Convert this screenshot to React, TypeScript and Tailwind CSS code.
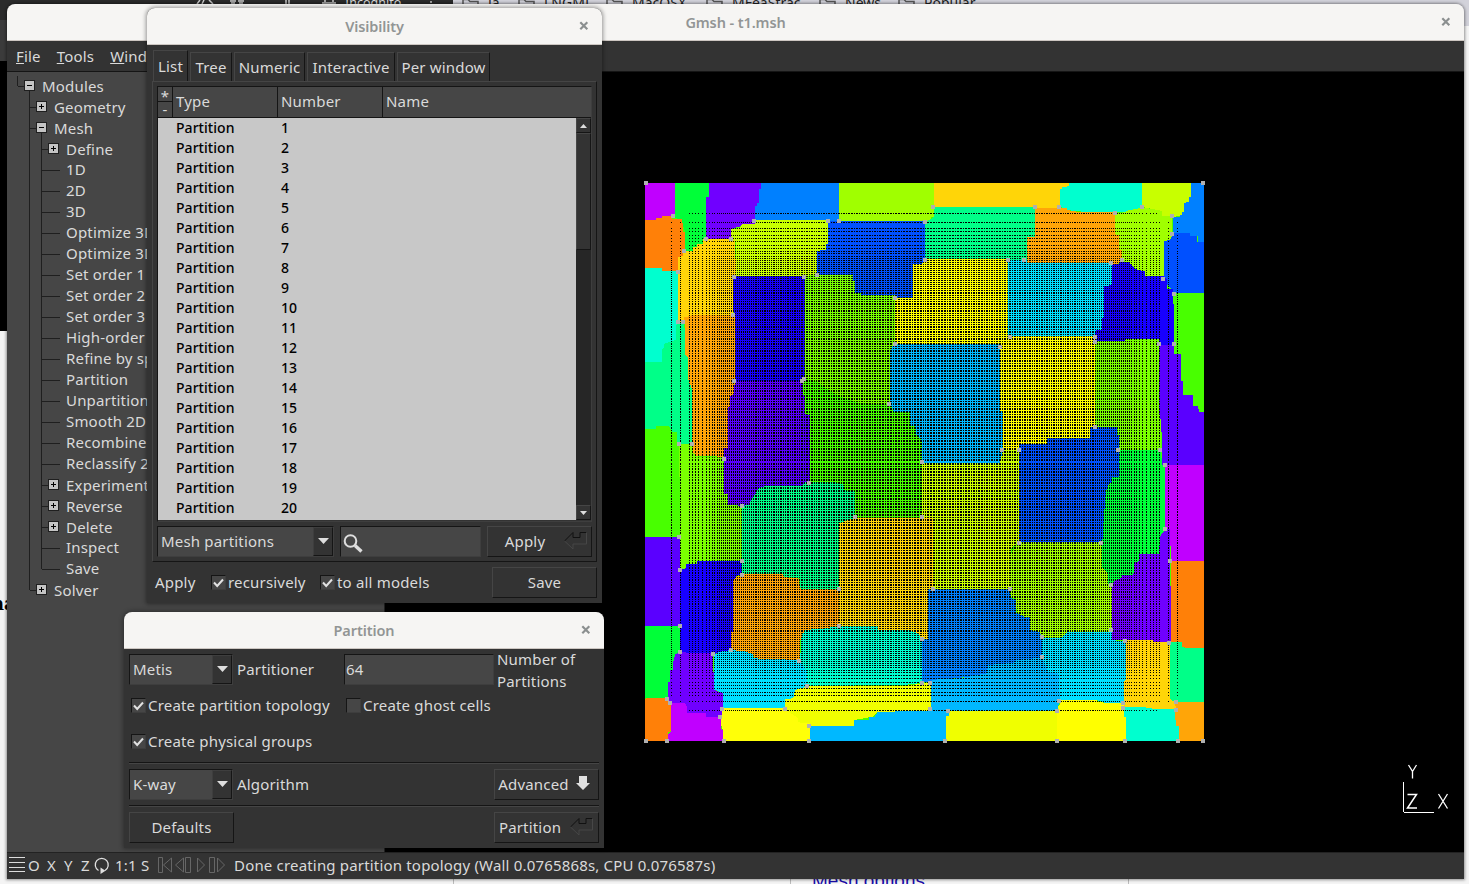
import React from "react";

/* ---------- mesh view ---------- */

const REGIONS: [string, string][] = [
  ["#c000ff", "15,24 105,24 105,127 96,127 96,124 66,124 66,130 48,130 48,136 15,136"],
  ["#00ff38", "105,24 207,24 207,66 198,66 198,192 189,192 189,207 171,207 171,216 159,216 159,228 135,228 135,170 129,150 125,132 105,130"],
  ["#7000ff", "207,24 363,24 363,42 357,42 357,84 351,84 351,93 345,93 345,148 305,148 305,153 273,162 273,192 198,192 198,66 207,66"],
  ["#0080ff", "363,24 597,24 597,137 345,137 345,93 351,93 351,84 357,84 357,42 363,42"],
  ["#a0ff00", "597,24 882,24 882,125 873,125 873,132 855,140 597,137"],
  ["#ffd508", "882,24 1287,24 1287,34 1266,36 1266,42 1260,42 1260,99 882,96"],
  ["#00ffcf", "1287,24 1506,24 1506,100 1494,108 1458,108 1458,112 1323,112 1323,108 1281,106 1281,102 1260,96 1260,42 1266,42 1266,36 1287,34"],
  ["#c8ff00", "1506,24 1653,24 1653,66 1647,66 1647,80 1632,84 1632,110 1626,122 1596,126 1566,122 1566,108 1540,102 1506,96"],
  ["#0080ff", "1653,24 1692,24 1692,202 1674,202 1674,184 1650,184 1650,174 1599,174 1599,126 1620,126 1620,120 1626,120 1626,110 1632,110 1632,84 1647,80 1647,66 1653,66"],
  ["#0050ff", "1599,174 1650,174 1650,184 1671,184 1671,202 1692,202 1692,357 1689,353 1602,353 1596,343 1581,330 1572,310 1572,198 1590,195 1590,180"],
  ["#ff8008", "15,136 48,136 48,130 66,130 66,124 96,124 96,132 125,132 129,150 129,170 135,170 135,230 125,246 114,250 114,288 66,288 66,279 15,279"],
  ["#00ffcf", "15,279 66,279 66,288 114,288 114,470 108,475 108,495 90,500 85,507 72,507 72,520 66,522 66,560 15,560"],
  ["#00ff88", "15,560 66,560 66,522 72,520 72,507 90,500 108,495 108,450 133,440 136,540 143,545 143,608 155,610 155,808 118,808 112,808 112,772 96,770 88,755 48,753 48,762 15,762"],
  ["#48ff00", "15,762 48,762 48,753 88,753 90,770 112,772 112,808 118,808 118,1086 15,1086"],
  ["#7aff00", "118,808 158,808 158,835 170,835 175,845 250,848 252,957 265,957 265,990 305,993 305,1158 172,1158 172,1167 138,1167 138,1180 120,1185"],
  ["#5a00ff", "15,1086 120,1086 120,1353 15,1353"],
  ["#00ff38", "15,1353 120,1353 120,1434 105,1438 105,1465 99,1465 99,1485 90,1485 90,1520 84,1520 84,1570 15,1570"],
  ["#ff8008", "15,1572 18,1569 78,1569 93,1585 93,1668 84,1672 84,1698 15,1698"],
  ["#c000ff", "93,1584 135,1584 142,1600 142,1614 198,1614 198,1626 243,1626 243,1660 249,1665 249,1698 84,1698 84,1680 93,1668"],
  ["#ffff08", "249,1590 520,1590 520,1660 510,1660 510,1698 251,1698 249,1665 243,1650 243,1626 249,1600"],
  ["#f0ff00", "465,1545 500,1533 790,1533 880,1521 873,1602 865,1608 712,1612 700,1625 642,1635 642,1653 510,1653 510,1645 475,1642 475,1630 460,1620 435,1602 435,1572 460,1570"],
  ["#00b8ff", "510,1653 642,1653 642,1635 687,1635 687,1627 702,1627 712,1612 765,1612 765,1608 850,1607 927,1604 927,1622 918,1625 918,1698 510,1698"],
  ["#f0ff00", "918,1622 927,1622 927,1608 1251,1608 1251,1698 918,1698"],
  ["#ffff00", "1251,1598 1260,1590 1260,1575 1370,1575 1370,1580 1398,1584 1452,1584 1452,1625 1458,1628 1458,1698 1251,1698"],
  ["#00ffcf", "1452,1597 1515,1597 1545,1602 1608,1602 1608,1652 1617,1652 1617,1698 1458,1698 1458,1628 1452,1625"],
  ["#ffa508", "1602,1581 1692,1581 1692,1698 1617,1698 1617,1652 1608,1652"],
  ["#00ff88", "1590,1400 1626,1400 1626,1416 1640,1419 1692,1419 1692,1581 1602,1581 1590,1572"],
  ["#ff8008", "1593,1158 1692,1158 1692,1419 1640,1419 1626,1414 1626,1400 1593,1400"],
  ["#c000ff", "1575,870 1692,870 1692,1158 1593,1158 1590,1065 1575,1062"],
  ["#5a00ff", "1557,510 1602,510 1602,537 1623,537 1623,618 1629,618 1629,660 1659,660 1659,693 1674,693 1677,711 1692,711 1692,870 1566,870 1566,800 1563,740 1557,710"],
  ["#48ff00", "1602,353 1692,353 1692,711 1677,711 1674,693 1659,693 1659,660 1629,660 1629,618 1623,618 1623,537 1602,537"],
  ["#ffd508", "114,246 130,243 130,228 159,228 159,216 171,216 171,207 189,207 189,192 285,192 288,303 280,420 133,430 133,441 114,441"],
  ["#c8ff00", "273,162 299,160 305,148 345,146 345,136 564,136 564,206 558,206 558,224 531,228 531,303 288,303 288,200 273,192"],
  ["#0050ff", "564,138 855,138 855,258 846,266 819,268 819,369 770,369 765,360 662,360 662,353 645,353 645,318 640,318 640,299 531,299 531,228 558,224 558,206 564,206"],
  ["#00ff88", "855,140 873,132 882,125 882,96 1185,96 1185,185 1161,185 1161,262 1104,258 855,252"],
  ["#ffa508", "1185,99 1281,99 1281,105 1323,112 1425,112 1425,178 1437,180 1437,225 1445,225 1445,255 1430,268 1161,264 1161,185 1185,185"],
  ["#a0ff00", "1425,114 1458,112 1458,108 1506,98 1540,102 1566,108 1566,122 1596,125 1596,185 1590,195 1572,198 1572,303 1515,303 1515,288 1493,285 1475,270 1445,255 1445,225 1437,225 1437,180 1425,178"],
  ["#00e0ff", "1104,255 1160,255 1161,264 1416,264 1416,327 1404,333 1392,333 1392,430 1386,430 1386,465 1367,468 1365,484 1104,484"],
  ["#1800ff", "1416,268 1437,266 1440,258 1466,262 1478,275 1493,285 1515,288 1515,303 1569,303 1581,315 1581,341 1600,343 1602,510 1557,510 1557,492 1455,492 1455,498 1365,498 1367,466 1386,466 1386,430 1392,430 1392,333 1404,333 1416,327"],
  ["#ffff00", "819,268 846,266 855,252 1104,252 1104,484 1365,484 1365,755 1350,757 1350,790 1222,790 1222,807 1137,807 1137,825 1089,825 1089,712 1080,707 1080,507 765,507 765,369 819,369"],
  ["#7aff00", "1365,498 1455,498 1455,492 1557,492 1557,710 1563,740 1563,825 1437,825 1437,780 1431,755 1365,755"],
  ["#7aff00", "495,303 531,299 640,299 640,318 645,318 645,353 662,360 765,360 765,507 750,530 750,687 630,687 590,680 560,640 495,612"],
  ["#48ff00", "495,610 530,620 560,640 600,665 660,685 750,687 762,710 810,712 810,752 828,755 828,780 845,795 847,855 846,1028 645,1028 645,950 612,945 612,930 590,922 510,922 510,720 495,717"],
  ["#1800ff", "280,303 495,303 495,618 285,618 285,420 280,410"],
  ["#5a00ff", "285,618 488,618 488,660 495,660 495,717 510,720 510,925 485,933 375,935 354,945 340,975 325,993 265,990 265,957 252,957 252,820 265,815 265,695 271,695 271,663 280,660"],
  ["#ffa508", "133,427 160,420 285,420 285,618 280,660 271,663 271,695 265,695 265,820 252,820 250,845 170,843 158,830 155,640 143,608 143,545 136,540"],
  ["#00b8ff", "765,507 1080,507 1080,707 1089,712 1089,855 1080,855 1080,863 847,863 845,795 828,780 828,755 810,752 810,712 762,710 750,687 750,530 757,515"],
  ["#0050ff", "1137,807 1222,807 1222,790 1350,790 1350,755 1431,755 1431,780 1437,780 1437,905 1416,906 1416,920 1404,930 1398,950 1392,1020 1392,1100 1137,1100"],
  ["#00ff38", "1437,825 1563,825 1566,870 1575,870 1575,1075 1560,1085 1557,1137 1497,1137 1497,1158 1483,1163 1480,1200 1448,1200 1445,1208 1425,1216 1416,1230 1404,1225 1387,1180 1387,1100 1392,1020 1398,950 1416,920 1416,905 1437,905"],
  ["#c8ff00", "846,863 1080,863 1089,825 1137,825 1137,1100 1113,1120 1113,1242 880,1242 880,1030 846,1028"],
  ["#a0ff00", "1137,1100 1387,1100 1387,1180 1404,1195 1404,1225 1416,1232 1416,1370 1284,1370 1265,1388 1206,1388 1200,1372 1170,1365 1170,1325 1152,1325 1130,1312 1128,1270 1112,1265 1110,1140"],
  ["#7000ff", "1416,1230 1425,1216 1445,1208 1448,1200 1480,1200 1483,1163 1497,1158 1497,1137 1557,1137 1560,1085 1575,1063 1590,1063 1593,1400 1540,1400 1537,1395 1416,1395"],
  ["#ffd508", "597,1045 615,1030 880,1028 880,1242 864,1245 864,1392 840,1392 835,1375 805,1365 715,1365 713,1353 597,1353"],
  ["#00ff88", "305,993 325,990 340,965 354,942 375,933 485,933 495,922 590,922 612,930 612,945 645,950 645,1028 597,1045 597,1242 480,1242 480,1210 430,1205 430,1197 305,1197"],
  ["#ffa508", "305,1197 430,1197 432,1206 475,1210 482,1242 597,1242 597,1353 555,1360 495,1365 480,1400 480,1455 345,1453 340,1440 318,1430 273,1425 273,1370 280,1365 280,1210"],
  ["#1800ff", "120,1185 138,1180 138,1167 172,1167 172,1158 305,1158 305,1197 288,1202 280,1220 280,1370 273,1370 273,1425 240,1430 225,1437 120,1432"],
  ["#00ffcf", "495,1365 555,1360 600,1353 713,1353 715,1365 805,1365 835,1375 846,1392 846,1524 790,1530 500,1533 500,1490 480,1455 485,1382"],
  ["#0080ff", "864,1242 1110,1242 1113,1270 1128,1275 1128,1312 1152,1325 1170,1325 1170,1365 1200,1372 1206,1388 1206,1450 1130,1455 1120,1463 1045,1470 1040,1495 990,1505 900,1515 873,1521 846,1522 846,1392 864,1392"],
  ["#00e0ff", "1206,1388 1265,1388 1284,1370 1416,1370 1416,1395 1458,1400 1458,1515 1452,1518 1452,1584 1398,1584 1370,1575 1260,1575 1255,1495 1225,1490 1206,1450"],
  ["#00b8ff", "873,1517 900,1512 960,1510 1040,1495 1045,1470 1120,1463 1130,1455 1206,1448 1225,1490 1255,1495 1260,1575 1251,1608 873,1607"],
  ["#ffd508", "1458,1396 1540,1396 1540,1400 1590,1402 1590,1572 1605,1581 1608,1602 1545,1602 1515,1597 1452,1597 1452,1518 1458,1515"],
  ["#7000ff", "120,1432 219,1435 222,1543 240,1552 249,1555 249,1602 243,1626 198,1626 198,1614 142,1614 142,1600 135,1584 93,1584 84,1570 84,1520 90,1520 90,1485 99,1485 99,1465 105,1438"],
  ["#00e0ff", "222,1440 240,1430 273,1425 318,1430 340,1438 340,1450 480,1455 500,1490 500,1535 465,1545 460,1570 435,1572 435,1600 249,1600 249,1555 222,1543"],
];

const NODES: [number, number][] = [
  [18, 24], [99, 123], [198, 192], [273, 192], [342, 138], [132, 228], [114, 291], [114, 441], [130, 441], [282, 306],
  [492, 306], [531, 300], [564, 138], [597, 138], [855, 141], [855, 255], [765, 369], [765, 508], [747, 687], [846, 861],
  [280, 420], [282, 618], [492, 612], [486, 618], [117, 807], [156, 807], [252, 852], [879, 96], [1185, 96], [1257, 96],
  [1506, 96], [1689, 24], [1426, 114], [1596, 123], [1596, 177], [1104, 255], [1152, 255], [1413, 264], [1446, 255],
  [1569, 312], [1602, 357], [1110, 486], [1365, 486], [1365, 501], [1557, 507], [1602, 507], [1080, 516], [1365, 756],
  [1086, 825], [1137, 825], [1434, 825], [1560, 825], [1575, 870], [507, 924], [306, 993], [645, 1026], [846, 1026],
  [117, 1086], [120, 1185], [306, 1158], [306, 1200], [597, 1242], [597, 1353], [120, 1353], [120, 1431], [219, 1437],
  [273, 1425], [477, 1458], [846, 1392], [846, 1524], [870, 1524], [870, 1602], [501, 1533], [435, 1602], [246, 1602],
  [240, 1626], [81, 1572], [90, 1584], [18, 1698], [81, 1698], [252, 1698], [507, 1653], [507, 1698], [879, 1242],
  [1110, 1242], [1137, 1104], [1383, 1104], [1413, 1230], [1413, 1365], [1206, 1386], [1206, 1446], [1575, 1062],
  [1590, 1158], [1455, 1398], [1588, 1404], [1257, 1578], [1251, 1608], [924, 1608], [915, 1698], [1251, 1698],
  [1449, 1584], [1449, 1599], [1455, 1698], [1608, 1581], [1608, 1605], [1614, 1698], [1689, 1698],
];

/* Pixel columns that fall between two mesh lines, mirrored around the middle. */
function gaps(head: number[], start: number, size: number): number[] {
  const out = [...head];
  const mid = size / 2;
  let x = start;
  while (x < mid) {
    const t = Math.max(0, (x - 104) / (mid - 104));
    const h = x < 104 ? 2 : 2.16 + 0.6 * Math.pow(t, 0.75);
    const next = x + h;
    for (let p = Math.round(x) + 1; p < Math.round(next) && p <= mid; p++) out.push(p);
    x = next;
  }
  const all = new Set<number>(out);
  out.forEach((v) => all.add(size - v));
  return [...all];
}

const COLS = gaps([26, 35, 44, 47, 50, 53, 57, 61, 64, 67, 69, 72, 74], 75, 558);
const ROWS = gaps([30, 39, 45, 48, 52, 55, 58, 62, 65, 68, 70, 73, 75], 76, 557);

function Mesh() {
  return (
    <svg width="563" height="562" viewBox="9 18 1689 1686" shapeRendering="crispEdges">
      <defs>
        <mask id="rows" maskUnits="userSpaceOnUse" x="0" y="0" width="1700" height="1710">
          {ROWS.map((r) => (
            <rect key={r} x={r < 35 || r > 522 ? 144 : 90} width={r < 35 || r > 522 ? 1410 : 1530} y={24 + r * 3} height="3" fill="#fff" />
          ))}
        </mask>
      </defs>
      <rect x="15" y="24" width="1677" height="1674" fill="#48ff00" />
      {REGIONS.map(([c, p], i) => (
        <polygon key={i} points={p} fill={c} />
      ))}
      <g mask="url(#rows)">
        {COLS.map((c) => (
          <rect key={c} x={15 + c * 3} y="24" width="3" height="1674" fill="#000" />
        ))}
      </g>
      {NODES.map(([x, y], i) => (
        <rect key={i} x={x - 6} y={y - 6} width="12" height="12" fill="#b0b0b0" />
      ))}
    </svg>
  );
}

function Axes() {
  return (
    <svg width="50" height="54" viewBox="0 0 50 54" fill="none" stroke="#fff" shapeRendering="crispEdges">
      <path d="M1.500 18v30M2 48.500h30" />
      <path d="M6.500 1l4 6.500v7M14.500 1l-4 6.500" strokeWidth="1.300" shapeRendering="auto" />
      <path d="M5.500 30.500h9l-9 13.500h9.500" strokeWidth="1.500" shapeRendering="auto" />
      <path d="M36.500 30l9 14.500M45.500 30l-9 14.500" strokeWidth="1.300" shapeRendering="auto" />
    </svg>
  );
}

/* ---------- small widgets ---------- */

function CloseIcon() {
  return (
    <svg width="10" height="10" viewBox="0 0 10 10" stroke="#8b8f8f" strokeWidth="2.200">
      <path d="M1.300 1.300l7 7M8.300 1.300l-7 7" />
    </svg>
  );
}

function TitleBar({ title }: { title: string }) {
  return (
    <div className="flex h-[37px] shrink-0 items-center border-b border-[#cdc7c2] bg-[#f6f5f3]">
      <div className="w-8" />
      <div className="flex-1 text-center text-[14.500px] font-semibold leading-[20px] tracking-[-0.1px] text-[#929595]">{title}</div>
      <div className="flex w-8 justify-center pr-[4px]">
        <CloseIcon />
      </div>
    </div>
  );
}

const raised = "border border-t-[#454545] border-l-[#454545] border-r-[#151515] border-b-[#151515]";
const sunken = "border border-t-[#151515] border-l-[#151515] border-r-[#3e3e3e] border-b-[#3e3e3e] bg-[#464646]";

function Button({ children, className = "" }: { children: React.ReactNode; className?: string }) {
  return <div className={`flex h-[31px] shrink-0 items-center justify-center ${raised} ${className}`}>{children}</div>;
}

function Choice({ label, className }: { label: string; className: string }) {
  return (
    <div className={`flex h-[31px] shrink-0 items-center ${sunken} ${className}`}>
      <span className="flex-1 pl-[3px]">{label}</span>
      <div className="flex h-[29px] w-[20px] items-center justify-center border border-[#151515] border-l-[#3e3e3e] border-t-[#3e3e3e] bg-[#333333]">
        <svg width="11" height="6" viewBox="0 0 11 6" fill="#dedede" className="-mt-[2px]">
          <path d="M0 0h11l-5.500 6z" />
        </svg>
      </div>
    </div>
  );
}

function Check({ on }: { on?: boolean }) {
  return (
    <div className={`flex h-[15px] w-[15px] shrink-0 items-center justify-center ${sunken}`}>
      {on && (
        <svg width="11" height="10" viewBox="0 0 11 10" fill="none" stroke="#e2e2e2" strokeWidth="2">
          <path d="M1 4.500l3.200 3.500L10 1.500" />
        </svg>
      )}
    </div>
  );
}

function ReturnIcon() {
  return (
    <svg width="24" height="18" viewBox="0 0 24 18" fill="none" className="-mt-px shrink-0">
      <path d="M.5 9L9 .5v5h7v-5h6.500" stroke="#111" />
      <path d="M22.500 .5v11.500H9v5L.5 9" stroke="#474747" />
    </svg>
  );
}

function Separator() {
  return <div className="h-[2px] border-t border-b border-t-[#151515] border-b-[#454545]" />;
}

/* ---------- module tree ---------- */

type Item = { label: string; level: number; kind?: "plus" | "minus"; last?: boolean };
const LEAVES = [
  "1D", "2D", "3D", "Optimize 3D", "Optimize 3D", "Set order 1", "Set order 2", "Set order 3", "High-order",
  "Refine by sp", "Partition", "Unpartition", "Smooth 2D", "Recombine", "Reclassify 2",
];
const TREE: Item[] = [
  { label: "Modules", level: 0, kind: "minus", last: true },
  { label: "Geometry", level: 1, kind: "plus" },
  { label: "Mesh", level: 1, kind: "minus" },
  { label: "Define", level: 2, kind: "plus" },
  ...LEAVES.map((label) => ({ label, level: 2 })),
  { label: "Experiment", level: 2, kind: "plus" },
  { label: "Reverse", level: 2, kind: "plus" },
  { label: "Delete", level: 2, kind: "plus" },
  { label: "Inspect", level: 2 },
  { label: "Save", level: 2, last: true },
  { label: "Solver", level: 1, kind: "plus", last: true },
];

function TreeRow({ item }: { item: Item }) {
  const { level, kind, last, label } = item;
  const own = 10.5 + level * 12;
  const box = own + 12;
  return (
    <div className="flex h-[21px] items-start whitespace-nowrap">
      <svg width={35 + level * 12} height="21" className="shrink-0" shapeRendering="crispEdges" fill="none" stroke="#1f1f1f">
        {level === 2 && <path d="M22.500 0v21" />}
        <path d={`M${own} 0V${last ? 10 : 21}`} />
        <path d={kind ? `M${own} 10.500h12` : `M${own} 10.500h18`} />
        {kind === "minus" && <path d={`M${box} 10v11`} />}
        {kind && (
          <>
            <rect x={box - 5} y="4.500" width="10" height="10" fill="#c4c4c4" />
            <path d={`M${box - 2.5} 9.500h5`} stroke="#000" />
            {kind === "plus" && <path d={`M${box} 7v5`} stroke="#000" />}
          </>
        )}
      </svg>
      <span className={kind ? "" : "-mt-px"}>{label}</span>
    </div>
  );
}

/* ---------- windows ---------- */

function MainWindow() {
  return (
    <div className="absolute left-[7px] top-[4px] flex h-[875px] w-[1457px] flex-col overflow-hidden rounded-t-lg shadow-[0_0_3px_1px_rgba(0,0,0,0.4)]">
      <TitleBar title="Gmsh - t1.msh" />
      <div className="flex h-[31px] shrink-0 items-center gap-[16px] border-b border-[#151515] bg-[#333333] pl-[9px]">
        <span><span className="underline">F</span>ile</span>
        <span><span className="underline">T</span>ools</span>
        <span><span className="underline">W</span>ind</span>
      </div>
      <div className="flex min-h-0 flex-1">
        <div className="w-[378px] shrink-0 overflow-hidden border-r border-[#222] bg-[#464646] pt-[4px]">
          {TREE.map((item, i) => (
            <TreeRow key={i} item={item} />
          ))}
        </div>
        <div className="relative flex-1 bg-black">
          <div className="absolute left-[258px] top-[109px]"><Mesh /></div>
          <div className="absolute left-[1017px] top-[692px]"><Axes /></div>
        </div>
      </div>
      <div className="flex h-[27px] shrink-0 items-center border-t border-[#222] bg-[#333333] pl-[2px] pb-px">
        <svg width="17" height="16" viewBox="0 0 17 16" stroke="#ddd" shapeRendering="crispEdges" className="-mt-[2px]">
          <path d="M0 .5h16M0 5.500h16M0 10.500h16M0 14.500h16" />
        </svg>
        <span className="w-[19px] pl-[2px]">O</span>
        <span className="w-[17px] pl-[2px]">X</span>
        <span className="w-[17px] pl-[2px]">Y</span>
        <span className="w-[15px] pl-[2px]">Z</span>
        <svg width="16" height="18" viewBox="0 0 16 18" fill="none" stroke="#e0e0e0" strokeWidth="1.300">
          <path d="M4.500 13.500A6.500 6.500 0 1 1 11 13.500" />
          <path d="M6.500 10.500l5 3.300-5 3.200z" fill="#e0e0e0" stroke="none" />
        </svg>
        <span className="ml-[5px] w-[26px]">1:1</span>
        <span className="w-[17px]">S</span>
        <svg width="68" height="18" viewBox="0 0 68 18" fill="none" stroke="#666" className="mb-[2px]">
          <path d="M.5 1.500h4v15h-4zM13.500 2v14L5.500 9zM25.500 2v14L17.500 9zM27.500 1.500h5v15h-5zM39.500 2v14l7-7zM51.500 1.500h5v15h-5zM59.500 2v14l7-7z" />
        </svg>
        <span className="ml-[8px] whitespace-nowrap">Done creating partition topology (Wall 0.0765868s, CPU 0.076587s)</span>
      </div>
    </div>
  );
}

function Tab({ label, width }: { label: string; width: string }) {
  return (
    <div className={`mr-[2px] flex h-[29px] items-center justify-center whitespace-nowrap border border-b-0 border-l-[#454545] border-t-[#454545] border-r-[#151515] pt-px ${width}`}>
      {label}
    </div>
  );
}

function VisibilityWindow() {
  return (
    <div className="absolute left-[147px] top-[8px] flex h-[595px] w-[455px] flex-col overflow-hidden rounded-t-lg bg-[#333333] shadow-[0_0_4px_1px_rgba(0,0,0,0.4)]">
      <TitleBar title="Visibility" />
      <div className="flex h-[36px] items-end pl-[6px]">
        <div className="mr-[2px] flex h-[31px] w-[35px] items-center justify-center border border-b-0 border-l-[#454545] border-t-[#454545] border-r-[#151515] pt-px">List</div>
        <Tab label="Tree" width="w-[42px]" />
        <Tab label="Numeric" width="w-[71px]" />
        <Tab label="Interactive" width="w-[88px]" />
        <Tab label="Per window" width="w-[93px]" />
      </div>
      <div className={`mx-[5px] h-[481px] px-[4px] pt-[4px] ${raised}`}>
        <div className="h-[436px] border border-[#151515] border-r-[#3e3e3e] border-b-[#3e3e3e]">
          <div className="flex h-[31px] border-b border-[#151515] bg-[#464646]">
            <div className="flex w-[14px] flex-col text-center">
              <div className="h-[15px] border-b border-[#151515] leading-[19px]">*</div>
              <div className="h-[15px] leading-[15px]">-</div>
            </div>
            <div className="w-[105px] border-l border-[#151515] pl-[3px] leading-[28px]">Type</div>
            <div className="w-[105px] border-l border-[#151515] pl-[3px] leading-[28px]">Number</div>
            <div className="flex-1 border-l border-[#151515] pl-[3px] leading-[28px]">Name</div>
          </div>
          <div className="flex h-[402px] bg-[#c8c8c8] text-[14px] font-medium leading-[20px] tracking-[0.05px] text-black">
            <div className="flex-1">
              {Array.from({ length: 20 }, (_, i) => (
                <div key={i} className="flex h-[20px]">
                  <span className="w-[105px] pl-[18px]">Partition</span>
                  <span className="pl-[18px]">{i + 1}</span>
                </div>
              ))}
            </div>
            <div className="flex w-[15px] flex-col justify-between bg-[#262626]">
              <div>
                <div className={`flex h-[15px] items-center justify-center bg-[#333333] ${raised}`}>
                  <svg width="7" height="4" viewBox="0 0 7 4" fill="#ddd"><path d="M0 4h7l-3.500-4z" /></svg>
                </div>
                <div className={`h-[117px] bg-[#333333] ${raised}`} />
              </div>
              <div className={`flex h-[15px] items-center justify-center bg-[#333333] ${raised}`}>
                <svg width="7" height="4" viewBox="0 0 7 4" fill="#ddd"><path d="M0 0h7l-3.500 4z" /></svg>
              </div>
            </div>
          </div>
        </div>
        <div className="mt-[4px] flex">
          <Choice label="Mesh partitions" className="w-[177px]" />
          <div className={`ml-[6px] flex h-[31px] w-[141px] items-center pl-[2px] pt-[3px] ${sunken}`}>
            <svg width="21" height="19" viewBox="0 0 21 19" fill="none" stroke="#dedede">
              <circle cx="7.500" cy="7" r="5.800" strokeWidth="2" />
              <path d="M12 11.500l6.500 6" strokeWidth="3.400" />
            </svg>
          </div>
          <Button className="ml-[6px] w-[105px] pl-[14px]">
            <span className="mr-[19px]">Apply</span>
            <ReturnIcon />
          </Button>
        </div>
      </div>
      <div className="flex items-center whitespace-nowrap pl-[8px] pt-[5px]">
        <span className="w-[56px]">Apply</span>
        <Check on />
        <span className="w-[94px] pl-[2px]">recursively</span>
        <Check on />
        <span className="w-[157px] pl-[2px]">to all models</span>
        <Button className="w-[105px]">Save</Button>
      </div>
    </div>
  );
}

function PartitionWindow() {
  return (
    <div className="absolute left-[124px] top-[612px] flex h-[236px] w-[480px] flex-col overflow-hidden rounded-t-lg bg-[#333333] shadow-[0_0_4px_1px_rgba(0,0,0,0.35)]">
      <TitleBar title="Partition" />
      <div className="flex flex-1 flex-col px-[5px] pt-[5px]">
        <div className="flex h-[31px] items-center">
          <Choice label="Metis" className="w-[104px]" />
          <span className="w-[111px] shrink-0 pl-[4px]">Partitioner</span>
          <div className={`flex h-[31px] w-[150px] shrink-0 items-center pl-px ${sunken}`}>64</div>
          <span className="whitespace-nowrap pl-[3px] leading-[22px]">Number of<br />Partitions</span>
        </div>
        <div className="mt-[5px] flex h-[31px] items-center whitespace-nowrap pl-[2px]">
          <Check on />
          <span className="w-[200px] pl-[2px]">Create partition topology</span>
          <Check />
          <span className="pl-[2px]">Create ghost cells</span>
        </div>
        <div className="mt-[5px] flex h-[31px] items-center pl-[2px]">
          <Check on />
          <span className="pl-[2px]">Create physical groups</span>
        </div>
        <div className="mt-[5px]"><Separator /></div>
        <div className="mt-[5px] flex h-[31px] items-center">
          <Choice label="K-way" className="w-[104px]" />
          <span className="w-[261px] pl-[4px]">Algorithm</span>
          <Button className="w-[105px] pr-[5px]">
            <span className="mr-[7px]">Advanced</span>
            <svg width="14" height="14" viewBox="0 0 14 14" fill="#e0e0e0" className="-mt-[4px]"><path d="M3 0h8v7h3l-7 7-7-7h3z" /></svg>
          </Button>
        </div>
        <div className="mt-[5px]"><Separator /></div>
        <div className="mt-[5px] flex h-[31px] items-center justify-between">
          <Button className="w-[105px]">Defaults</Button>
          <Button className="w-[105px]">
            <span className="mr-[9px]">Partition</span>
            <ReturnIcon />
          </Button>
        </div>
      </div>
    </div>
  );
}

/* ---------- what shows behind the windows ---------- */

function Bookmark({ label, width }: { label: string; width: string }) {
  return (
    <div className={`flex items-start gap-[9px] ${width}`}>
      <svg width="17" height="12" viewBox="0 0 17 12" fill="none" stroke="#555" strokeWidth="1.500" className="-mt-[2px] shrink-0">
        <path d="M1 11V1.500h5l2 2h8V11" />
      </svg>
      <span>{label}</span>
    </div>
  );
}

function Desktop() {
  return (
    <div className="absolute inset-0 flex flex-col bg-[#f4f4f4] text-black">
      <div className="flex h-[26px] overflow-hidden tracking-normal">
        <div className="flex h-[20px] w-[453px] items-start bg-[#2b2b2b] text-[12.500px] leading-[6px] text-[#ddd]">
          <svg width="453" height="5" viewBox="0 0 453 5" fill="none" stroke="#ccc" strokeWidth="1.500" className="-mr-[108px]">
            <path d="M197 4l3-4M202 4l2-4M209 0l4 4M230 1h6M238 1h6M231 3h4M239 3h4M286 4V0M289 4V0M322 3h14M325 0v2M333 0v2M430 2h2" />
          </svg>
          <span>Incognito</span>
        </div>
        <div className="flex h-[26px] flex-1 bg-[#d2d2da] pl-[9px] text-[14px] leading-[6px] text-[#222]">
          <Bookmark label="Ja" width="w-[56px]" />
          <Bookmark label="LNGMI" width="w-[88px]" />
          <Bookmark label="MacOSX" width="w-[100px]" />
          <Bookmark label="MFeaStrac" width="w-[113px]" />
          <Bookmark label="News" width="w-[79px]" />
          <Bookmark label="Popular" width="w-[90px]" />
        </div>
      </div>
      <div className="-mt-[6px] h-[41px] w-[7px] bg-[#3b3b3b]" />
      <div className="h-[270px] w-[7px] bg-black" />
      <div className="h-[260px]" />
      <div className="-ml-[9px] font-['DejaVu_Serif'] text-[18px] font-bold leading-[26px] tracking-normal">na</div>
      <div className="flex-1" />
      <div className="flex h-[20px] items-end overflow-hidden pl-[453px]">
        <div className="h-[20px] w-[337px] border-l border-[#bbb]" />
        <div className="h-[20px] w-[339px] border-l border-r border-[#bbb] pl-[21px] font-['Liberation_Sans'] text-[19px] leading-[34px] tracking-normal text-[#1a0dab]">Mesh options</div>
      </div>
    </div>
  );
}

export default function App() {
  return (
    <div className="relative h-[884px] w-[1469px] overflow-hidden font-['Noto_Sans',sans-serif] text-[15px] leading-[21px] tracking-[0.18px] text-[#dadada]">
      <Desktop />
      <MainWindow />
      <VisibilityWindow />
      <PartitionWindow />
    </div>
  );
}
